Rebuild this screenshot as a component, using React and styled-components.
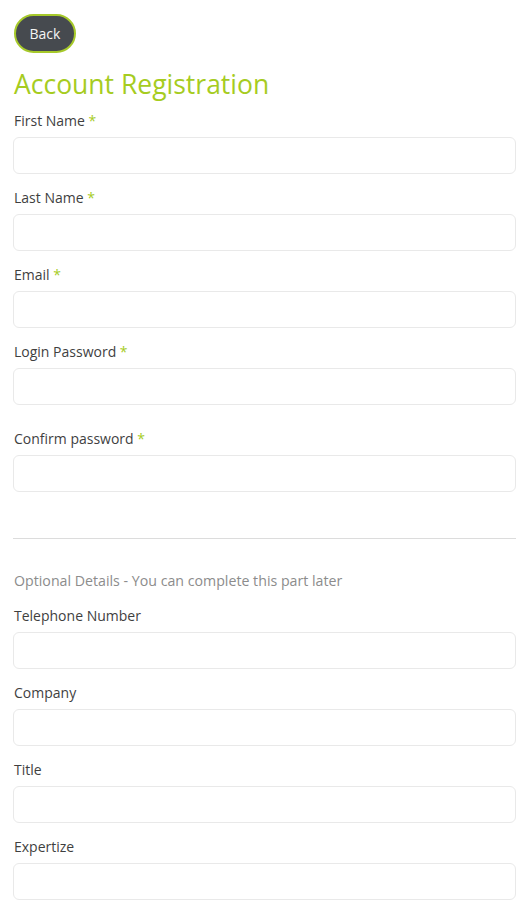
import React from "react";
import styled, { createGlobalStyle } from "styled-components";

const GlobalStyle = createGlobalStyle`
  body {
    margin: 0;
    background: #ffffff;
    font-family: "Open Sans", "Liberation Sans", sans-serif;
  }
`;

const requiredFields = [
  { name: "firstName", label: "First Name" },
  { name: "lastName", label: "Last Name" },
  { name: "email", label: "Email" },
  { name: "password", label: "Login Password", type: "password", wide: true },
  { name: "password2", label: "Confirm password", type: "password" },
];

const optionalFields = [
  { name: "phone", label: "Telephone Number" },
  { name: "company", label: "Company" },
  { name: "title", label: "Title" },
  { name: "expertize", label: "Expertize" },
];

export default function App() {
  return (
    <>
      <GlobalStyle />
      <Page>
        <BackButton type="button">Back</BackButton>
        <Title>Account Registration</Title>
        <Form>
          {requiredFields.map((f) => (
            <Field key={f.name} $wide={f.wide}>
              <Label htmlFor={f.name}>
                {f.label} <Star>*</Star>
              </Label>
              <Input id={f.name} name={f.name} type={f.type || "text"} />
            </Field>
          ))}
          <Divider />
          <Hint>Optional Details - You can complete this part later</Hint>
          {optionalFields.map((f) => (
            <Field key={f.name}>
              <Label htmlFor={f.name}>{f.label}</Label>
              <Input id={f.name} name={f.name} type="text" />
            </Field>
          ))}
        </Form>
      </Page>
    </>
  );
}

const Page = styled.div`
  padding: 14px 11px 0 13px;
  display: flex;
  flex-direction: column;
  align-items: flex-start;
`;

const BackButton = styled.button`
  margin-left: 1px;
  width: 62px;
  height: 39px;
  border-radius: 20px;
  border: 2px solid #a6c92a;
  background: #464a4f;
  color: #f4f4f4;
  font-family: "Open Sans", sans-serif;
  font-size: 14px;
  cursor: pointer;
`;

const Title = styled.h1`
  margin: 14px 0 12px 1px;
  font-size: 26.5px;
  line-height: 34px;
  font-weight: 400;
  color: #a6cc1f;
`;

const Form = styled.form`
  width: 100%;
  display: flex;
  flex-direction: column;
`;

const Field = styled.div`
  width: 100%;
  display: flex;
  flex-direction: column;
  margin-bottom: ${(p) => (p.$wide ? "26px" : "16px")};
`;

const Label = styled.label`
  margin-left: 1px;
  font-size: 14px;
  line-height: 16px;
  color: #3f3f3f;
  margin-bottom: 8px;
`;

const Star = styled.span`
  color: #a6cc1f;
`;

const Input = styled.input`
  box-sizing: border-box;
  width: 100%;
  height: 37px;
  border: 1px solid #e9e9e9;
  border-radius: 6px;
  background: #ffffff;
  padding: 0 10px;
  font-family: "Open Sans", sans-serif;
  font-size: 14px;
  outline: none;
`;

const Divider = styled.hr`
  width: 100%;
  margin: 30px 0 34px;
  border: none;
  border-top: 1px solid #dcdcdc;
`;

const Hint = styled.div`
  margin: 0 0 19px 1px;
  font-size: 14.2px;
  line-height: 16px;
  color: #8c8c8c;
`;
